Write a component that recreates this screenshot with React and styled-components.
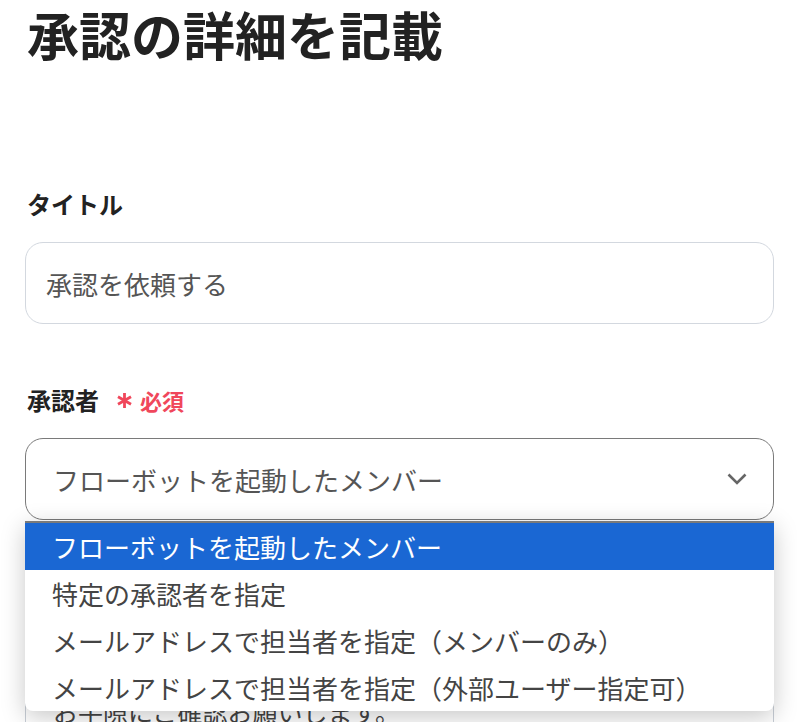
import React from "react";
import styled, { createGlobalStyle } from "styled-components";

const GlobalStyle = createGlobalStyle`
  body {
    margin: 0;
    background: #ffffff;
    font-family: "Noto Sans CJK JP", "Noto Sans", sans-serif;
    color: #222222;
  }
`;

const Page = styled.div`
  padding: 0 23px 0 25px;
  height: 722px;
  overflow: hidden;
`;

const Heading = styled.h1`
  margin: 0;
  font-size: 52px;
  line-height: 68px;
  font-weight: 700;
  color: #222222;
  padding-left: 2px;
`;

const Field = styled.div`
  margin-top: ${(p) => p.$top}px;
  position: relative;
`;

const Label = styled.div`
  display: flex;
  align-items: center;
  gap: 17px;
  font-size: 24px;
  font-weight: 700;
  line-height: 32px;
  padding-left: 2px;
  margin-bottom: 22px;
`;

const Required = styled.span`
  color: #f0475b;
  font-size: 22px;
  font-weight: 700;
  display: flex;
  align-items: center;
  gap: 7px;
`;

const Input = styled.div`
  height: 82px;
  border: 1px solid ${(p) => (p.$dark ? "#7a7a7a" : "#d3d8df")};
  border-radius: 18px;
  display: flex;
  align-items: center;
  justify-content: space-between;
  padding: 0 26px 0 ${(p) => p.$pad}px;
  font-size: 26px;
  color: #555555;
  box-sizing: border-box;
`;

const Menu = styled.ul`
  position: absolute;
  left: 0;
  right: 0;
  top: calc(100% + 1px);
  margin: 0;
  padding: 0;
  list-style: none;
  background: #ffffff;
  border-top: 2px solid #7a7a7a;
  border-radius: 0 0 8px 8px;
  box-shadow: 0 6px 24px rgba(0, 0, 0, 0.22);
  overflow: hidden;
  z-index: 2;
`;

const Option = styled.li`
  height: 47px;
  display: flex;
  align-items: center;
  padding-left: 27px;
  font-size: 26px;
  color: ${(p) => (p.$active ? "#ffffff" : "#444444")};
  background: ${(p) => (p.$active ? "#1a67d3" : "transparent")};
`;

const TextArea = styled.div`
  border: 1px solid #c8ced6;
  border-radius: 18px;
  padding: 16px 27px;
  font-size: 25px;
  line-height: 40px;
  color: #444444;
  height: 200px;
`;

const Chevron = () => (
  <svg width="20" height="12" viewBox="0 0 20 12" fill="none">
    <path d="M1.5 1.5l8.5 8.5 8.5-8.5" stroke="#666" strokeWidth="2.6" />
  </svg>
);

const Star = () => (
  <svg width="17" height="17" viewBox="0 0 17 17" stroke="#f0475b" strokeWidth="2.8">
    <path d="M8.5 1v15M2 4.75l13 7.5M2 12.25l13-7.5" />
  </svg>
);

const options = [
  "フローボットを起動したメンバー",
  "特定の承認者を指定",
  "メールアドレスで担当者を指定（メンバーのみ）",
  "メールアドレスで担当者を指定（外部ユーザー指定可）",
];

export default function App() {
  return (
    <>
      <GlobalStyle />
      <Page>
        <Heading>承認の詳細を記載</Heading>
        <Field $top={120}>
          <Label>タイトル</Label>
          <Input $pad={20}>承認を依頼する</Input>
        </Field>
        <Field $top={60}>
          <Label>
            承認者
            <Required>
              <Star />
              必須
            </Required>
          </Label>
          <Input $dark $pad={27}>
            フローボットを起動したメンバー
            <Chevron />
          </Input>
          <Menu>
            {options.map((o, i) => (
              <Option key={o} $active={i === 0}>
                {o}
              </Option>
            ))}
          </Menu>
        </Field>
        <Field $top={114}>
          <TextArea>
            承認をお願いします。
            <br />
            お手隙にご確認お願いします。
          </TextArea>
        </Field>
      </Page>
    </>
  );
}
